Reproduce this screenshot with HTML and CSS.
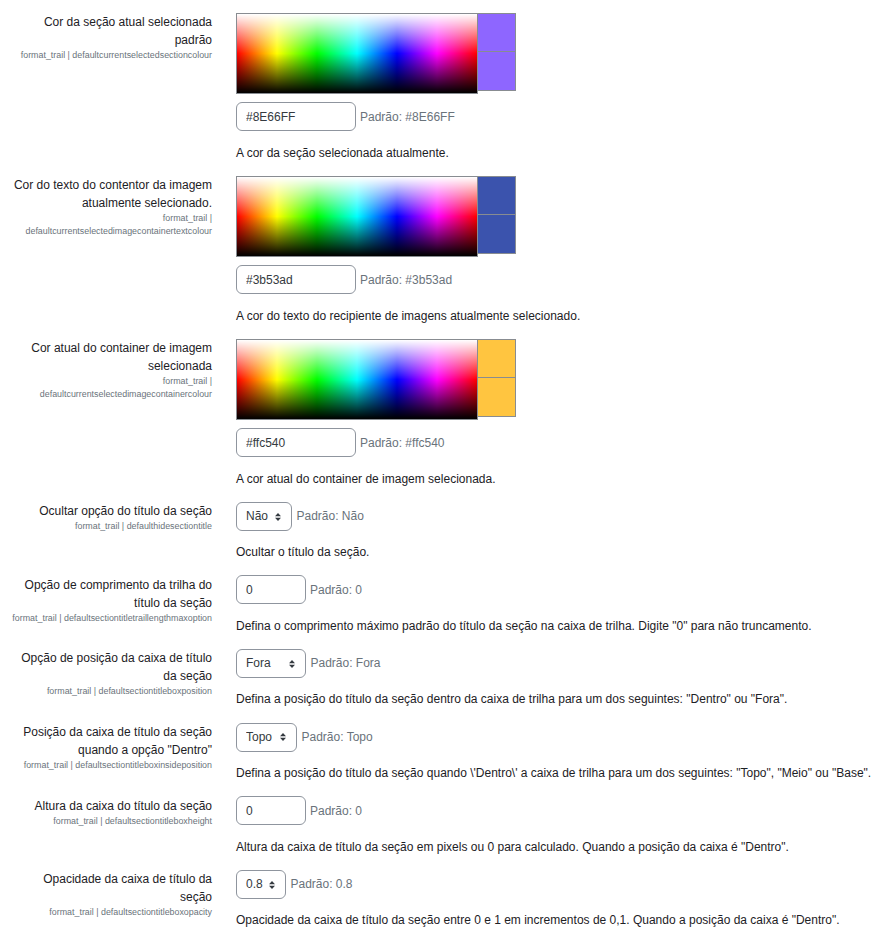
FILE: index.html
```html
<!DOCTYPE html>
<html lang="pt-BR">
<head>
<meta charset="utf-8">
<title>Configurações format_trail</title>
<link rel="stylesheet" href="styles.css">
</head>
<body>
<div class="settings">

  <div class="setting">
    <div class="label-col">
      <div class="title">Cor da seção atual selecionada padrão</div>
      <div class="shortname">format_trail | defaultcurrentselectedsectioncolour</div>
    </div>
    <div class="control-col">
      <div class="colour-widget">
        <div class="picker"></div>
        <div class="preview">
          <div class="swatch swatch-top swatch-purple"></div>
          <div class="swatch swatch-bottom swatch-purple"></div>
        </div>
      </div>
      <div class="field-line">
        <input class="text-input colour-input" type="text" value="#8E66FF">
        <span class="default">Padrão: #8E66FF</span>
      </div>
      <div class="description">A cor da seção selecionada atualmente.</div>
    </div>
  </div>

  <div class="setting">
    <div class="label-col">
      <div class="title">Cor do texto do contentor da imagem atualmente selecionado.</div>
      <div class="shortname">format_trail | defaultcurrentselectedimagecontainertextcolour</div>
    </div>
    <div class="control-col">
      <div class="colour-widget">
        <div class="picker"></div>
        <div class="preview">
          <div class="swatch swatch-top swatch-blue"></div>
          <div class="swatch swatch-bottom swatch-blue"></div>
        </div>
      </div>
      <div class="field-line">
        <input class="text-input colour-input" type="text" value="#3b53ad">
        <span class="default">Padrão: #3b53ad</span>
      </div>
      <div class="description">A cor do texto do recipiente de imagens atualmente selecionado.</div>
    </div>
  </div>

  <div class="setting">
    <div class="label-col">
      <div class="title">Cor atual do container de imagem selecionada</div>
      <div class="shortname">format_trail | defaultcurrentselectedimagecontainercolour</div>
    </div>
    <div class="control-col">
      <div class="colour-widget">
        <div class="picker"></div>
        <div class="preview">
          <div class="swatch swatch-top swatch-yellow"></div>
          <div class="swatch swatch-bottom swatch-yellow"></div>
        </div>
      </div>
      <div class="field-line">
        <input class="text-input colour-input" type="text" value="#ffc540">
        <span class="default">Padrão: #ffc540</span>
      </div>
      <div class="description">A cor atual do container de imagem selecionada.</div>
    </div>
  </div>

  <div class="setting">
    <div class="label-col">
      <div class="title">Ocultar opção do título da seção</div>
      <div class="shortname">format_trail | defaulthidesectiontitle</div>
    </div>
    <div class="control-col">
      <div class="field-line">
        <select class="select-input">
          <option>Sim</option>
          <option selected>Não</option>
        </select>
        <span class="default">Padrão: Não</span>
      </div>
      <div class="description">Ocultar o título da seção.</div>
    </div>
  </div>

  <div class="setting">
    <div class="label-col">
      <div class="title">Opção de comprimento da trilha do título da seção</div>
      <div class="shortname">format_trail | defaultsectiontitletraillengthmaxoption</div>
    </div>
    <div class="control-col">
      <div class="field-line">
        <input class="text-input number-input" type="text" value="0">
        <span class="default">Padrão: 0</span>
      </div>
      <div class="description">Defina o comprimento máximo padrão do título da seção na caixa de trilha. Digite "0" para não truncamento.</div>
    </div>
  </div>

  <div class="setting">
    <div class="label-col">
      <div class="title">Opção de posição da caixa de título da seção</div>
      <div class="shortname">format_trail | defaultsectiontitleboxposition</div>
    </div>
    <div class="control-col">
      <div class="field-line">
        <select class="select-input">
          <option>Dentro</option>
          <option selected>Fora</option>
        </select>
        <span class="default">Padrão: Fora</span>
      </div>
      <div class="description">Defina a posição do título da seção dentro da caixa de trilha para um dos seguintes: "Dentro" ou "Fora".</div>
    </div>
  </div>

  <div class="setting">
    <div class="label-col">
      <div class="title">Posição da caixa de título da seção quando a opção "Dentro"</div>
      <div class="shortname">format_trail | defaultsectiontitleboxinsideposition</div>
    </div>
    <div class="control-col">
      <div class="field-line">
        <select class="select-input">
          <option selected>Topo</option>
          <option>Meio</option>
          <option>Base</option>
        </select>
        <span class="default">Padrão: Topo</span>
      </div>
      <div class="description">Defina a posição do título da seção quando \'Dentro\' a caixa de trilha para um dos seguintes: "Topo", "Meio" ou "Base".</div>
    </div>
  </div>

  <div class="setting">
    <div class="label-col">
      <div class="title">Altura da caixa do título da seção</div>
      <div class="shortname">format_trail | defaultsectiontitleboxheight</div>
    </div>
    <div class="control-col">
      <div class="field-line">
        <input class="text-input number-input" type="text" value="0">
        <span class="default">Padrão: 0</span>
      </div>
      <div class="description">Altura da caixa de título da seção em pixels ou 0 para calculado. Quando a posição da caixa é "Dentro".</div>
    </div>
  </div>

  <div class="setting">
    <div class="label-col">
      <div class="title">Opacidade da caixa de título da seção</div>
      <div class="shortname">format_trail | defaultsectiontitleboxopacity</div>
    </div>
    <div class="control-col">
      <div class="field-line">
        <select class="select-input">
          <option>0.0</option>
          <option>0.1</option>
          <option>0.2</option>
          <option>0.3</option>
          <option>0.4</option>
          <option>0.5</option>
          <option>0.6</option>
          <option>0.7</option>
          <option selected>0.8</option>
          <option>0.9</option>
          <option>1.0</option>
        </select>
        <span class="default">Padrão: 0.8</span>
      </div>
      <div class="description">Opacidade da caixa de título da seção entre 0 e 1 em incrementos de 0,1. Quando a posição da caixa é "Dentro".</div>
    </div>
  </div>

</div>
</body>
</html>
```

FILE: styles.css
```css
* {
  box-sizing: border-box;
}

html, body {
  margin: 0;
  padding: 0;
  background: #ffffff;
}

body {
  font-family: "Liberation Sans", Arial, sans-serif;
  font-size: 12px;
  color: #1d2125;
}

.settings {
  padding: 11px 0 0 9.5px;
}

.setting {
  display: grid;
  grid-template-columns: 202.5px 1fr;
  column-gap: 24px;
  padding-bottom: 12.6px;
}

.label-col {
  text-align: right;
  padding-top: 2px;
}

.title {
  line-height: 18px;
  color: #1d2125;
}

.shortname {
  font-size: 8.9px;
  line-height: 13px;
  color: #6a737b;
}

.control-col {
  padding-top: 1.5px;
  min-width: 0;
}

.colour-widget {
  display: flex;
  align-items: flex-start;
  height: 81px;
  margin-top: 0.5px;
  margin-bottom: 8px;
}

.picker {
  width: 242px;
  height: 81px;
  border: 1px solid #888c91;
  background:
    linear-gradient(to bottom, #ffffff 0%, rgba(255,255,255,0) 50%, rgba(0,0,0,0) 50%, #000000 100%),
    linear-gradient(to right, #ff0000 0%, #ffff00 16.67%, #00ff00 33.33%, #00ffff 50%, #0000ff 66.67%, #ff00ff 83.33%, #ff0000 100%);
}

.preview {
  display: flex;
  flex-direction: column;
}

.swatch {
  width: 38px;
  height: 39px;
  border: 1px solid #888c91;
  border-left-width: 0;
}

.swatch-bottom {
  border-top-width: 0;
  height: 39px;
}

.swatch-purple { background: #8e66ff; }
.swatch-blue { background: #3b53ad; }
.swatch-yellow { background: #ffc540; }

.field-line {
  display: flex;
  align-items: center;
  gap: 4px;
}

.text-input,
.select-input {
  height: 29px;
  border: 1px solid #8f959e;
  border-radius: 6px;
  font-family: inherit;
  font-size: 12px;
  color: #343a40;
  background-color: #ffffff;
  margin: 0;
}

.text-input {
  padding: 0 9px;
}

.colour-input {
  width: 120px;
}

.number-input {
  width: 70px;
}

.select-input {
  -webkit-appearance: none;
  appearance: none;
  padding: 0 21.5px 0 9px;
  background-image: url("data:image/svg+xml,%3Csvg xmlns='http://www.w3.org/2000/svg' viewBox='0 0 4 5'%3E%3Cpath fill='%23343a40' d='M2 0L0 2h4zm0 5L0 3h4z'/%3E%3C/svg%3E");
  background-repeat: no-repeat;
  background-position: right 10px center;
  background-size: 6px 7.5px;
  margin-right: 1px;
}

.default {
  color: #6a737b;
  line-height: 18px;
}

.description {
  margin-top: 12.5px;
  line-height: 18px;
  white-space: nowrap;
}
```
